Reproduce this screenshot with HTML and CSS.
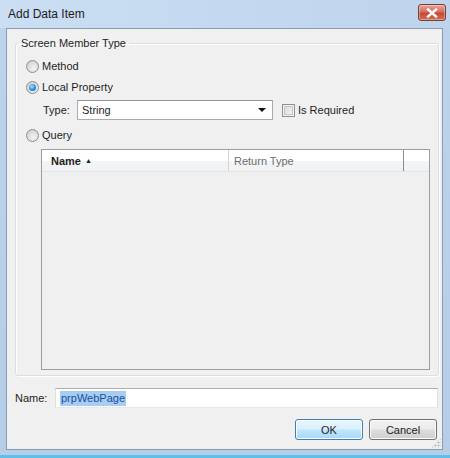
FILE: index.html
```html
<!DOCTYPE html>
<html>
<head>
<meta charset="utf-8">
<link rel="stylesheet" href="styles.css">
</head>
<body>
<div class="window">
  <div class="titlebar">
    <span class="title">Add Data Item</span>
    <span class="close"><svg width="14" height="10" viewBox="0 0 14 10"><path d="M3 1.5 L11 8.5 M11 1.5 L3 8.5" stroke="#fff" stroke-width="2.4" stroke-linecap="square"/></svg></span>
  </div>
  <div class="client">
    <fieldset class="group">
      <legend>Screen Member Type</legend>
      <div class="opt first"><span class="radio"></span><span>Method</span></div>
      <div class="opt"><span class="radio checked"></span><span>Local Property</span></div>
      <div class="typerow">
        <span class="typelbl">Type:</span>
        <div class="combo"><span>String</span><span class="arrow"></span></div>
        <span class="check"></span><span>Is Required</span>
      </div>
      <div class="opt query"><span class="radio"></span><span>Query</span></div>
      <div class="list">
        <div class="lhead">
          <div class="col c1"><b>Name</b><span class="sort">&#9650;</span></div>
          <div class="col c2">Return Type</div>
          <div class="col c3"></div>
        </div>
      </div>
    </fieldset>
    <div class="namerow">
      <span class="namelbl">Name:</span>
      <div class="textbox"><span class="sel">prpWebPage</span></div>
    </div>
    <div class="buttons">
      <div class="btn ok">OK</div>
      <div class="btn">Cancel</div>
    </div>
    <div class="grip"></div>
  </div>
</div>
</body>
</html>
```
FILE: styles.css
```css
html, body { margin: 0; padding: 0; }
body {
  font-family: "Liberation Sans", Arial, sans-serif;
  font-size: 11px;
  color: #1e1e1e;
  background: #fff;
}
.window {
  width: 450px;
  height: 458px;
  box-sizing: border-box;
  display: flex;
  flex-direction: column;
  background: linear-gradient(to bottom, #c9dcf1 0px, #bcd3ec 30px, #b6cde8 100%);
  border-bottom: 3px solid #5ac2ea;
  position: relative;
}
.titlebar {
  height: 28px;
  flex: none;
  display: flex;
  align-items: center;
  padding-left: 8px;
  padding-right: 4px;
  background: linear-gradient(to right, #cbdef3, #bdd4ec);
}
.title {
  font-size: 12px;
  color: #1b1b1b;
  flex: 1;
  margin-top: -1px;
}
.close {
  width: 28px;
  height: 17px;
  box-sizing: border-box;
  border: 1px solid #7a3a35;
  border-radius: 3px;
  background: linear-gradient(to bottom, #e8a498 0%, #d5705f 45%, #c44a36 55%, #d66c56 100%);
  display: flex;
  align-items: center;
  justify-content: center;
  margin-top: -3px;
  box-shadow: inset 0 0 0 1px rgba(255,255,255,0.35);
}
.client {
  flex: 1;
  margin: 0 7px 5px 6px;
  background: #f0f0f0;
  border: 1px solid #8a9bb0;
  position: relative;
  padding: 7px 3px 0 8px;
}
.group {
  margin: 0;
  padding: 0 0 5px 10px;
  border: 1px solid #d5dfe5;
  border-radius: 3px;
  box-shadow: inset 1px 1px 0 #fff, 1px 1px 0 #fff;
  box-sizing: border-box;
}
.group legend {
  padding: 0 3px;
  margin-left: -8px;
  line-height: 15px;
  height: 15px;
  color: #1e1e1e;
}
.opt {
  display: flex;
  align-items: center;
  height: 16px;
  margin-top: 5px;
}
.opt.first { margin-top: 7px; }
.radio {
  width: 11px;
  height: 11px;
  border-radius: 50%;
  border: 1px solid #8f8f8f;
  background: radial-gradient(circle at 60% 65%, #f4f4f4 0%, #dcdcdc 55%, #c8c8c8 100%);
  margin-right: 3px;
  position: relative;
  flex: none;
}
.radio.checked::after {
  content: "";
  position: absolute;
  left: 2px; top: 2px;
  width: 7px; height: 7px;
  border-radius: 50%;
  background: radial-gradient(circle at 40% 35%, #9fe3ff 0%, #2a8de0 55%, #0d4fa4 100%);
}
.typerow {
  display: flex;
  align-items: center;
  height: 20px;
  margin-top: 5px;
  padding-left: 17px;
}
.typelbl { width: 34px; }
.combo {
  width: 196px;
  height: 20px;
  box-sizing: border-box;
  border: 1px solid #a5acb5;
  border-top-color: #8e98a5;
  background: #fff;
  display: flex;
  align-items: center;
  padding-left: 4px;
  margin-right: 9px;
  position: relative;
}
.combo span:first-child { flex: 1; }
.arrow {
  width: 0; height: 0;
  border-left: 4px solid transparent;
  border-right: 4px solid transparent;
  border-top: 4px solid #111;
  margin-right: 6px;
}
.check {
  width: 11px;
  height: 11px;
  border: 1px solid #8f8f8f;
  background: linear-gradient(135deg, #d8d8d8, #f6f6f6);
  box-shadow: inset 0 0 0 1px #f4f4f4, inset 0 0 0 2px #c5c5c5;
  margin-right: 3px;
}
.opt.query { margin-top: 7px; }
.list {
  margin: 6px 8px 0 15px;
  height: 221px;
  box-sizing: border-box;
  border: 1px solid #9a9ea5;
  background: #f0f0f0;
}
.lhead {
  display: flex;
  height: 21px;
  background: linear-gradient(to bottom, #ffffff 0%, #ffffff 50%, #f3f4f6 51%, #f1f2f4 100%);
  border-bottom: 1px solid #e2e4e7;
}
.col {
  display: flex;
  align-items: center;
  padding-left: 9px;
  box-sizing: border-box;
  border-right: 1px solid #d5d5d5;
}
.c1 { width: 187px; color: #1e1e1e; }
.c1 b { font-weight: bold; }
.sort { font-size: 7px; margin-left: 4px; margin-top: -1px; }
.c2 { width: 175px; color: #6d6d6d; padding-left: 5px; border-right-color: #8a8a8a; }
.c3 { flex: 1; border-right: none; }
.namerow {
  display: flex;
  align-items: center;
  margin-top: 12px;
  height: 20px;
}
.namelbl { width: 40px; }
.textbox {
  width: 383px;
  height: 20px;
  box-sizing: border-box;
  border: 1px solid #dbdfe6;
  border-top-color: #abadb3;
  border-bottom-color: #e3e9ef;
  background: #fff;
  display: flex;
  align-items: center;
  padding-left: 4px;
}
.sel {
  background: #a8cdf2;
  color: #1a4f9c;
  padding: 0 1px;
  line-height: 15px;
}
.buttons {
  display: flex;
  justify-content: flex-end;
  gap: 6px;
  margin-top: 11px;
  padding-right: 2px;
}
.btn {
  width: 68px;
  height: 21px;
  box-sizing: border-box;
  border: 1px solid #707070;
  border-radius: 3px;
  background: linear-gradient(to bottom, #f2f2f2 0%, #ebebeb 48%, #dddddd 52%, #cfcfcf 100%);
  display: flex;
  align-items: center;
  justify-content: center;
  box-shadow: inset 0 0 0 1px #fbfbfb;
  color: #1e1e1e;
}
.btn.ok {
  border-color: #3c7fb1;
  background: linear-gradient(to bottom, #eaf6fd 0%, #d9f0fc 48%, #bee6fd 52%, #a7d9f5 100%);
  box-shadow: inset 0 0 0 1px #fff;
}
.grip {
  position: absolute;
  right: 1px;
  bottom: 1px;
  width: 10px;
  height: 10px;
  background-image: radial-gradient(circle, #b8b8b8 0.8px, transparent 1.2px);
  background-size: 3px 3px;
  clip-path: polygon(100% 0, 100% 100%, 0 100%);
}
```
